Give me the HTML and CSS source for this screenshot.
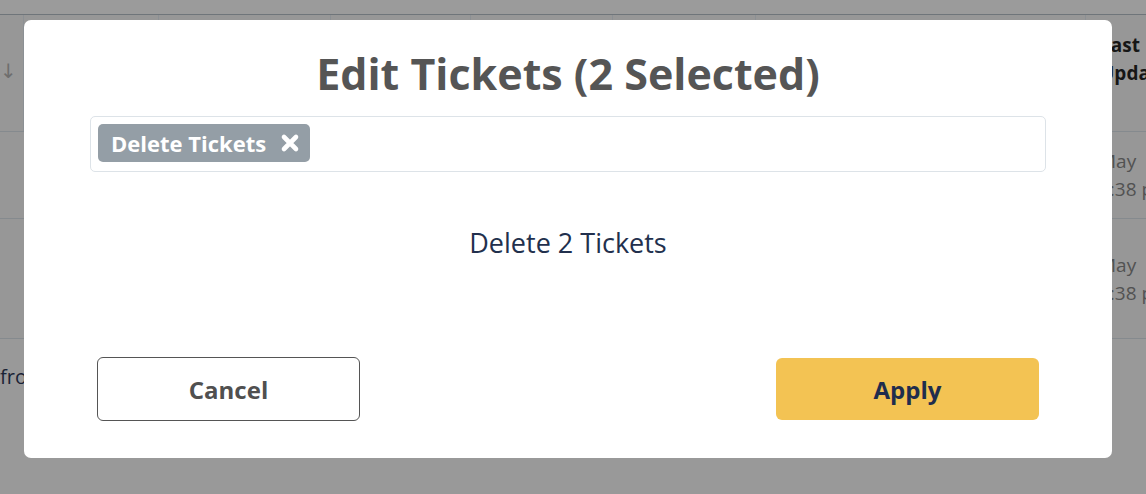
FILE: index.html
```html
<!DOCTYPE html>
<html>
<head>
<meta charset="utf-8">
<link rel="stylesheet" href="styles.css">
</head>
<body>
<div class="page">
  <div class="topbar"></div>
  <div class="table">
    <div class="row head">
      <div class="cell c0"><span class="sort">↓</span></div>
      <div class="cell c1"></div>
      <div class="cell c2"></div>
      <div class="cell c3"></div>
      <div class="cell c4"></div>
      <div class="cell c5"></div>
      <div class="cell c6"></div>
      <div class="cell c7"><span class="htext">Last<br>Updated</span></div>
    </div>
    <div class="row r1">
      <div class="cell c0"></div>
      <div class="cell c1"></div>
      <div class="cell c2"></div>
      <div class="cell c3"></div>
      <div class="cell c4"></div>
      <div class="cell c5"></div>
      <div class="cell c6"></div>
      <div class="cell c7"><span class="dtext">May<br>3:38 pm</span></div>
    </div>
    <div class="row r2">
      <div class="cell c0"></div>
      <div class="cell c1"></div>
      <div class="cell c2"></div>
      <div class="cell c3"></div>
      <div class="cell c4"></div>
      <div class="cell c5"></div>
      <div class="cell c6"></div>
      <div class="cell c7"><span class="dtext">May<br>3:38 pm</span></div>
    </div>
  </div>
  <div class="footer">from 2</div>
</div>

<div class="modal">
  <h1 class="title">Edit Tickets (2 Selected)</h1>
  <div class="picker">
    <span class="chip">Delete Tickets
      <svg class="chip-x" viewBox="0 0 20 20" width="20" height="20"><path d="M4 4 L16 16 M16 4 L4 16" stroke="#fff" stroke-width="4.6" stroke-linecap="round"/></svg>
    </span>
  </div>
  <p class="message">Delete 2 Tickets</p>
  <div class="actions">
    <button class="btn cancel">Cancel</button>
    <button class="btn apply">Apply</button>
  </div>
</div>
</body>
</html>
```
FILE: styles.css
```css
* { box-sizing: border-box; }
html, body { margin: 0; padding: 0; }
body {
  width: 1146px;
  height: 494px;
  overflow: hidden;
  background: #999999;
  font-family: "Open Sans", "Liberation Sans", sans-serif;
  position: relative;
}
.page { width: 1146px; }
.topbar {
  height: 15px;
  background: #9b9b9b;
  border-bottom: 1px solid #6f757a;
}
.table { background: #979797; }
.row {
  display: grid;
  grid-template-columns: 23px 135px 172px 140px 142px 143px 192px 138px 61px;
  border-bottom: 1px solid #858a8e;
}
.row.head { height: 117px; }
.row.r1 { height: 87px; }
.row.r2 { height: 120px; }
.head .cell { border-left: 1px solid #8c9094; }
.head .cell.c0 { border-left: 0; }
.cell { display: flex; align-items: center; }
.head .c7 { grid-column: 9; }
.r1 .c7, .r2 .c7 { grid-column: 9; }
.sort {
  font-family: "DejaVu Sans", sans-serif;
  font-size: 20px;
  color: #6e6e6e;
  margin-top: -4px;
}
.htext {
  font-weight: 700;
  font-size: 19px;
  line-height: 28px;
  color: #161616;
  margin-left: 14px;
  margin-top: -28px;
  white-space: nowrap;
}
.dtext {
  font-size: 19px;
  line-height: 28px;
  color: #525252;
  margin-left: 14px;
  white-space: nowrap;
}
.footer {
  padding-top: 24px;
  font-size: 20px;
  color: #1a2336;
}
.modal {
  position: absolute;
  left: 24px;
  top: 20px;
  width: 1088px;
  height: 438px;
  background: #ffffff;
  border-radius: 7px;
  display: flex;
  flex-direction: column;
  padding: 0 66px 37px;
}
.title {
  margin: 28px 0 0;
  height: 52px;
  font-size: 43px;
  line-height: 52px;
  font-weight: 700;
  color: #555555;
  text-align: center;
}
.picker {
  margin-top: 16px;
  height: 56px;
  border: 1px solid #dde3e8;
  border-radius: 5px;
  padding: 7px 7px;
  display: flex;
  align-items: flex-start;
}
.chip {
  height: 38px;
  display: inline-flex;
  align-items: center;
  gap: 14px;
  padding: 0 10px 0 13px;
  background: #949ea6;
  border-radius: 5px;
  color: #ffffff;
  font-weight: 700;
  font-size: 22px;
}
.chip-x { display: block; }
.message {
  margin: 56px 0 0;
  line-height: 30px;
  font-size: 27px;
  color: #22304d;
  text-align: center;
}
.actions {
  margin-top: auto;
  padding: 0 7px;
  display: flex;
  justify-content: space-between;
  align-items: center;
}
.btn {
  width: 263px;
  font-family: inherit;
  font-weight: 700;
  font-size: 24px;
  border-radius: 6px;
}
.cancel {
  height: 64px;
  background: #ffffff;
  border: 1px solid #555555;
  color: #505050;
}
.apply {
  height: 62px;
  background: #f3c353;
  border: 0;
  color: #1f2d4d;
}
```
